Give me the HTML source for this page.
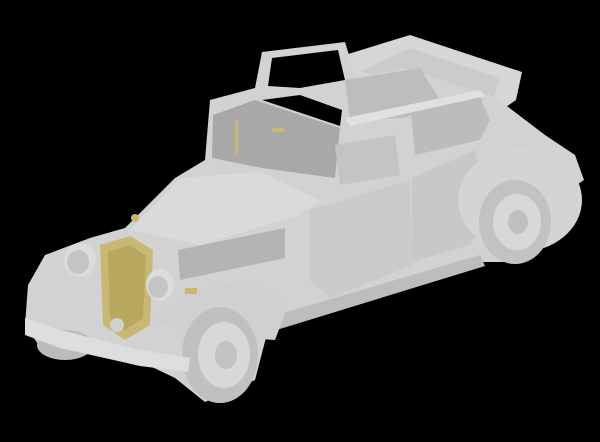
<!DOCTYPE html>
<html><head><meta charset="utf-8"><style>
html,body{margin:0;padding:0;background:#000;width:600px;height:442px;overflow:hidden}
svg{display:block}
</style></head><body>
<svg width="600" height="442" viewBox="0 0 600 442" xmlns="http://www.w3.org/2000/svg">
<rect width="600" height="442" fill="#000"/>
<!-- folded top -->
<polygon points="345,55 410,35 522,72 516,100 490,118 400,80 355,78" fill="#d6d6d6"/>
<polygon points="360,72 410,48 500,78 490,110 410,82" fill="#cbcbcb"/>
<!-- main silhouette -->
<polygon points="25,325 28,285 45,255 90,238 125,228 175,178 205,160 210,100 255,88 262,52 345,42 356,78 405,68 495,97 545,135 575,155 584,180 566,192 550,240 520,262 480,262 420,278 330,305 268,330 255,380 205,402 175,378 150,366 100,352 40,347" fill="#d2d2d2"/>
<!-- roll frame opening -->
<polygon points="272,58 338,50 345,80 300,88 268,86" fill="#000"/>
<!-- windshield opening -->
<polygon points="213,115 255,100 340,128 335,178 262,168 212,158" fill="#a8a8a8"/>
<polygon points="262,100 300,95 342,110 340,126" fill="#000"/>
<!-- seats through side -->
<polygon points="345,80 420,68 440,100 405,118 350,120" fill="#bdbdbd"/>
<polygon points="410,105 478,92 490,120 480,140 415,155" fill="#bcbcbc"/>
<polygon points="335,145 395,135 400,175 340,185" fill="#c4c4c4"/>
<!-- window frames -->
<polygon points="345,118 480,90 486,96 350,126" fill="#e0e0e0"/>
<!-- hood top -->
<polygon points="130,230 180,178 260,172 320,200 300,215 200,245" fill="#dadada"/>
<!-- hood side vents -->
<polygon points="178,250 285,228 285,258 180,280" fill="#b4b4b4"/>
<!-- door side -->
<polygon points="310,210 410,180 412,265 330,298 310,280" fill="#cacaca"/>
<polygon points="412,178 475,150 490,215 470,245 412,262" fill="#c8c8c8"/>
<!-- running board -->
<polygon points="260,320 480,255 485,266 270,332" fill="#bdbdbd"/>
<!-- rear fender -->
<ellipse cx="520" cy="200" rx="62" ry="52" fill="#d4d4d4"/>
<!-- rear wheel -->
<ellipse cx="515" cy="222" rx="36" ry="42" fill="#c2c2c2"/>
<ellipse cx="517" cy="222" rx="24" ry="28" fill="#d8d8d8"/>
<ellipse cx="518" cy="222" rx="10" ry="12" fill="#c0c0c0"/>
<!-- front fender -->
<polygon points="150,320 190,290 250,280 290,300 275,340 200,335" fill="#d0d0d0"/>
<!-- front wheel -->
<ellipse cx="220" cy="355" rx="38" ry="48" fill="#c0c0c0"/>
<ellipse cx="224" cy="355" rx="26" ry="33" fill="#d8d8d8"/>
<ellipse cx="226" cy="355" rx="11" ry="14" fill="#c2c2c2"/>
<!-- left front wheel -->
<ellipse cx="65" cy="345" rx="28" ry="15" fill="#bcbcbc"/>
<!-- bumper -->
<polygon points="25,318 60,330 140,350 190,358 188,372 140,366 60,348 25,335" fill="#dedede"/>
<!-- grille -->
<polygon points="100,245 130,236 153,250 150,325 125,340 103,325" fill="#c9b873"/>
<polygon points="108,252 130,245 146,256 143,318 125,330 110,318" fill="#b8a85f"/>
<circle cx="117" cy="325" r="7" fill="#d0d0d0"/>
<!-- headlights -->
<ellipse cx="80" cy="260" rx="16" ry="17" fill="#dcdcdc"/>
<ellipse cx="78" cy="262" rx="11" ry="12" fill="#c4c4c4"/>
<ellipse cx="160" cy="285" rx="14" ry="16" fill="#dcdcdc"/>
<ellipse cx="158" cy="287" rx="10" ry="11" fill="#c4c4c4"/>
<!-- small yellow details -->
<rect x="235" y="120" width="3" height="35" fill="#c9b873"/>
<rect x="272" y="128" width="12" height="4" fill="#c9b873"/>
<circle cx="135" cy="218" r="4" fill="#c9b873"/>
<rect x="185" y="288" width="12" height="6" fill="#c9b873"/>
</svg>
</body></html>
